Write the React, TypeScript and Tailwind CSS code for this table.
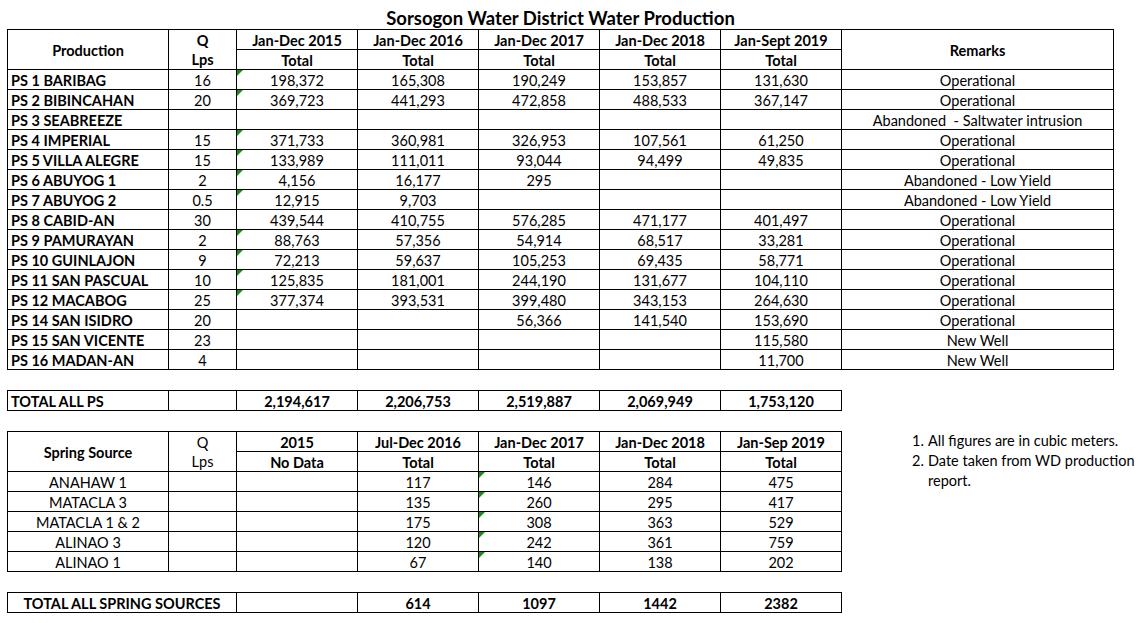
import React from "react";

type PsRow = { name: string; q: string; v: string[]; remark: string; flag?: boolean };

const psRows: PsRow[] = [
  { name: "PS 1 BARIBAG", q: "16", v: ["198,372", "165,308", "190,249", "153,857", "131,630"], remark: "Operational", flag: true },
  { name: "PS 2 BIBINCAHAN", q: "20", v: ["369,723", "441,293", "472,858", "488,533", "367,147"], remark: "Operational", flag: true },
  { name: "PS 3 SEABREEZE", q: "", v: ["", "", "", "", ""], remark: "Abandoned\u00a0 - Saltwater intrusion" },
  { name: "PS 4 IMPERIAL", q: "15", v: ["371,733", "360,981", "326,953", "107,561", "61,250"], remark: "Operational", flag: true },
  { name: "PS 5 VILLA ALEGRE", q: "15", v: ["133,989", "111,011", "93,044", "94,499", "49,835"], remark: "Operational", flag: true },
  { name: "PS 6 ABUYOG 1", q: "2", v: ["4,156", "16,177", "295", "", ""], remark: "Abandoned - Low Yield", flag: true },
  { name: "PS 7 ABUYOG 2", q: "0.5", v: ["12,915", "9,703", "", "", ""], remark: "Abandoned - Low Yield", flag: true },
  { name: "PS 8 CABID-AN", q: "30", v: ["439,544", "410,755", "576,285", "471,177", "401,497"], remark: "Operational" },
  { name: "PS 9 PAMURAYAN", q: "2", v: ["88,763", "57,356", "54,914", "68,517", "33,281"], remark: "Operational", flag: true },
  { name: "PS 10 GUINLAJON", q: "9", v: ["72,213", "59,637", "105,253", "69,435", "58,771"], remark: "Operational", flag: true },
  { name: "PS 11 SAN PASCUAL", q: "10", v: ["125,835", "181,001", "244,190", "131,677", "104,110"], remark: "Operational", flag: true },
  { name: "PS 12 MACABOG", q: "25", v: ["377,374", "393,531", "399,480", "343,153", "264,630"], remark: "Operational", flag: true },
  { name: "PS 14 SAN ISIDRO", q: "20", v: ["", "", "56,366", "141,540", "153,690"], remark: "Operational" },
  { name: "PS 15 SAN VICENTE", q: "23", v: ["", "", "", "", "115,580"], remark: "New Well" },
  { name: "PS 16 MADAN-AN", q: "4", v: ["", "", "", "", "11,700"], remark: "New Well" },
];

const springRows = [
  { name: "ANAHAW 1", v: ["117", "146", "284", "475"] },
  { name: "MATACLA 3", v: ["135", "260", "295", "417"] },
  { name: "MATACLA 1 & 2", v: ["175", "308", "363", "529"] },
  { name: "ALINAO 3", v: ["120", "242", "361", "759"] },
  { name: "ALINAO 1", v: ["67", "140", "138", "202"] },
];

const cell = "relative flex h-5 items-center justify-center border-r border-b border-black pt-[3px] leading-none";
const tall = "relative flex h-10 items-center justify-center border-r border-b border-black pt-[3px] leading-none row-span-2";

function Flag() {
  // excel "number stored as text" marker
  return <span className="absolute left-0 top-0 h-0 w-0 border-t-[6px] border-r-[6px] border-t-[#1e8a1e] border-r-transparent" />;
}

export default function App() {
  return (
    <div className="h-[623px] w-[1141px] bg-white pl-[7px] text-[14.5px] text-black" style={{ fontFamily: "Lato, 'Open Sans', sans-serif" }}>
      <div className="flex h-[29px] w-[1107px] items-end justify-center pb-[2px] text-[18.5px] font-bold leading-none">
        Sorsogon Water District Water Production
      </div>

      {/* pumping stations */}
      <div className="grid w-[1107px] grid-cols-[161px_68px_121px_121px_121px_121px_121px_272px] border-l border-t border-black">
        <div className={`${tall} font-bold`}>Production</div>
        <div className="row-span-2 flex h-10 flex-col items-center border-r border-b border-black font-bold">
          <span className="h-5 leading-[21px]">Q</span>
          <span className="h-5 leading-[19px]">Lps</span>
        </div>
        {["Jan-Dec 2015", "Jan-Dec 2016", "Jan-Dec 2017", "Jan-Dec 2018", "Jan-Sept 2019"].map((h) => (
          <div key={h} className={`${cell} font-bold`}>{h}</div>
        ))}
        <div className={`${tall} font-bold`}>Remarks</div>
        {[0, 1, 2, 3, 4].map((i) => (
          <div key={i} className={`${cell} font-bold`}>Total</div>
        ))}
        {psRows.map((r) => (
          <React.Fragment key={r.name}>
            <div className={`${cell} justify-start pl-[3px] font-bold`}>{r.name}</div>
            <div className={cell}>{r.q}</div>
            {r.v.map((x, i) => (
              <div key={i} className={cell}>
                {i === 0 && r.flag && <Flag />}
                {x}
              </div>
            ))}
            <div className={cell}>{r.remark}</div>
          </React.Fragment>
        ))}
      </div>

      <div className="mt-5 grid w-[835px] grid-cols-[161px_68px_121px_121px_121px_121px_121px] border-l border-t border-black font-bold">
        <div className={`${cell} justify-start pl-[3px]`}>TOTAL ALL PS</div>
        <div className={cell} />
        {["2,194,617", "2,206,753", "2,519,887", "2,069,949", "1,753,120"].map((x) => (
          <div key={x} className={cell}>{x}</div>
        ))}
      </div>

      {/* spring sources */}
      <div className="mt-5 flex items-start">
        <div className="grid w-[835px] grid-cols-[161px_68px_121px_121px_121px_121px_121px] border-l border-t border-black">
          <div className={`${tall} font-bold`}>Spring Source</div>
          <div className="row-span-2 flex h-10 flex-col items-center border-r border-b border-black">
            <span className="h-5 leading-[21px]">Q</span>
            <span className="h-5 leading-[19px]">Lps</span>
          </div>
          {["2015", "Jul-Dec 2016", "Jan-Dec 2017", "Jan-Dec 2018", "Jan-Sep 2019"].map((h) => (
            <div key={h} className={`${cell} font-bold`}>{h}</div>
          ))}
          {["No Data", "Total", "Total", "Total", "Total"].map((h, i) => (
            <div key={i} className={`${cell} font-bold`}>{h}</div>
          ))}
          {springRows.map((r) => (
            <React.Fragment key={r.name}>
              <div className={cell}>{r.name}</div>
              <div className={cell} />
              <div className={cell} />
              {r.v.map((x, i) => (
                <div key={i} className={cell}>
                  {i === 1 && <Flag />}
                  {x}
                </div>
              ))}
            </React.Fragment>
          ))}
        </div>

        <ol className="ml-[70px] w-[225px] text-[14.5px] leading-5">
          <li className="flex">
            <span className="w-4 shrink-0">1.</span>
            <span>All figures are in cubic meters.</span>
          </li>
          <li className="flex">
            <span className="w-4 shrink-0">2.</span>
            <span>Date taken from WD production report.</span>
          </li>
        </ol>
      </div>

      <div className="mt-5 grid w-[835px] grid-cols-[229px_121px_121px_121px_121px_121px] border-l border-t border-black font-bold">
        <div className={cell}>TOTAL ALL SPRING SOURCES</div>
        <div className={cell} />
        {["614", "1097", "1442", "2382"].map((x) => (
          <div key={x} className={cell}>{x}</div>
        ))}
      </div>
    </div>
  );
}
